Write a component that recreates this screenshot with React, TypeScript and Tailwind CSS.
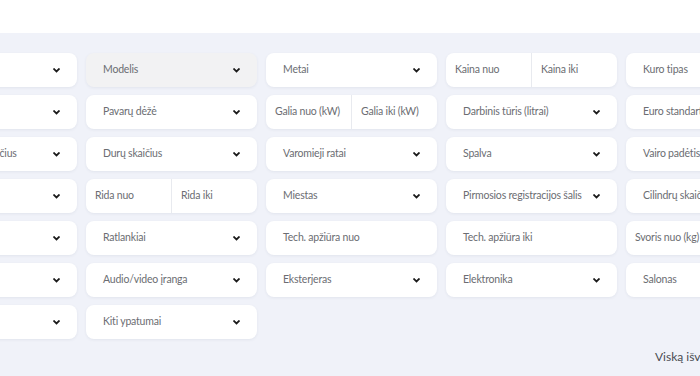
import React from "react";

type Cell =
  | { kind: "select"; label: string; disabled?: boolean }
  | { kind: "input"; label: string }
  | { kind: "split"; a: string; b: string }
  | { kind: "empty" };

const Chevron = () => (
  <svg width="7" height="5" viewBox="0 0 7 5" className="shrink-0">
    <path d="M1.1 1.1 L3.5 3.5 L5.9 1.1" fill="none" stroke="#1a1a1a" strokeWidth="1.8" strokeLinecap="square" />
  </svg>
);

const cells: Cell[] = [
  { kind: "select", label: "Markė" },
  { kind: "select", label: "Modelis", disabled: true },
  { kind: "select", label: "Metai" },
  { kind: "split", a: "Kaina nuo", b: "Kaina iki" },
  { kind: "select", label: "Kuro tipas" },

  { kind: "select", label: "Kėbulo tipas" },
  { kind: "select", label: "Pavarų dėžė" },
  { kind: "split", a: "Galia nuo (kW)", b: "Galia iki (kW)" },
  { kind: "select", label: "Darbinis tūris (litrai)" },
  { kind: "select", label: "Euro standartas" },

  { kind: "select", label: "Sėdimų vietų skaičius" },
  { kind: "select", label: "Durų skaičius" },
  { kind: "select", label: "Varomieji ratai" },
  { kind: "select", label: "Spalva" },
  { kind: "select", label: "Vairo padėtis" },

  { kind: "select", label: "Būklė" },
  { kind: "split", a: "Rida nuo", b: "Rida iki" },
  { kind: "select", label: "Miestas" },
  { kind: "select", label: "Pirmosios registracijos šalis" },
  { kind: "select", label: "Cilindrų skaičius" },

  { kind: "select", label: "Defektai" },
  { kind: "select", label: "Ratlankiai" },
  { kind: "input", label: "Tech. apžiūra nuo" },
  { kind: "input", label: "Tech. apžiūra iki" },
  { kind: "split", a: "Svoris nuo (kg)", b: "Svoris iki (kg)" },

  { kind: "select", label: "Saugumas" },
  { kind: "select", label: "Audio/video įranga" },
  { kind: "select", label: "Eksterjeras" },
  { kind: "select", label: "Elektronika" },
  { kind: "select", label: "Salonas" },

  { kind: "select", label: "Kita" },
  { kind: "select", label: "Kiti ypatumai" },
];

const card =
  "h-[34px] rounded-[8px] shadow-[0_1px_3px_rgba(40,50,90,0.07)] flex items-center text-[10.5px] tracking-[-0.2px] text-[#6b6d72] whitespace-nowrap overflow-hidden";

function CellView({ c }: { c: Cell }) {
  if (c.kind === "empty") return <div />;
  if (c.kind === "select")
    return (
      <div className={`${card} ${c.disabled ? "bg-[#f2f2f3]" : "bg-white"} pl-[17px] pr-[17px] justify-between`}>
        <span>{c.label}</span>
        <Chevron />
      </div>
    );
  if (c.kind === "input")
    return (
      <div className={`${card} bg-white pl-[17px]`}>
        <span>{c.label}</span>
      </div>
    );
  return (
    <div className={`${card} bg-white`}>
      <div className="flex-1 h-full flex items-center pl-[9px] border-r border-[#e8eaef]">{c.a}</div>
      <div className="flex-1 h-full flex items-center pl-[9px]">{c.b}</div>
    </div>
  );
}

export default function App() {
  return (
    <div
      className="w-[700px] h-[376px] overflow-hidden bg-[#f0f2f9]"
      style={{ fontFamily: "Lato, 'Noto Sans', sans-serif" }}
    >
      <div className="h-[33px] bg-white" />
      <div className="ml-[-94px] w-[891px] pt-[20px]">
        <div className="grid grid-cols-[repeat(5,171px)] gap-x-[9px] gap-y-[8px]">
          {cells.map((c, i) => (
            <CellView key={i} c={c} />
          ))}
        </div>
        <div className="flex pl-[749px] pt-[9px] text-[12px] text-[#4a4c52] whitespace-nowrap">Viską išvalyti</div>
      </div>
    </div>
  );
}
